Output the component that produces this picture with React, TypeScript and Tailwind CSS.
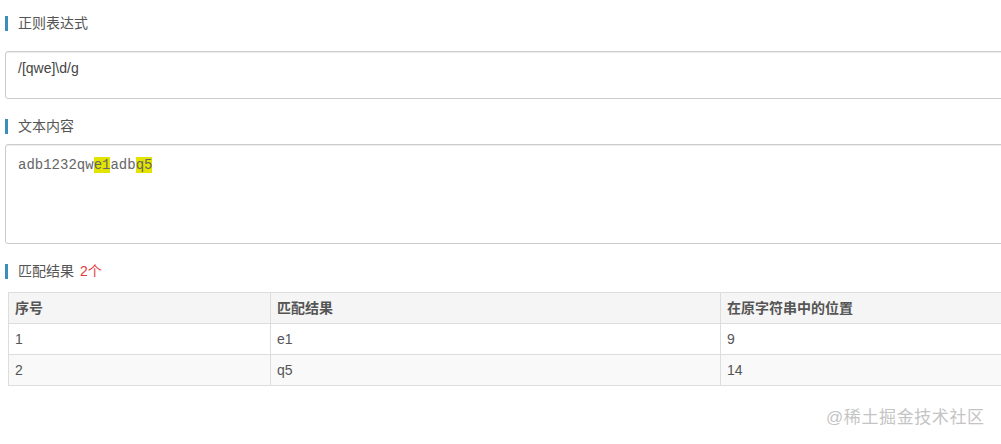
const cjk = { fontFamily: '"Liberation Sans", "Noto Sans CJK SC", sans-serif' }

function Title({ children }: { children: React.ReactNode }) {
  return (
    <div className="flex items-center h-5 pl-[5px]">
      <span className="w-[3px] h-[15px] bg-[#3c8dbc]" />
      <span className="ml-[10px] text-[14px] text-[#555]">{children}</span>
    </div>
  )
}

const rows = [
  { no: '1', match: 'e1', pos: '9' },
  { no: '2', match: 'q5', pos: '14' },
]

export default function App() {
  return (
    <div className="relative w-screen h-[444px] overflow-hidden bg-white" style={cjk}>
      <div className="pt-[13px]">
        <Title>正则表达式</Title>
        <div className="ml-[5px] mt-[18px] w-[1010px] h-[48px] border border-[#ccc] rounded-[3px] shadow-[inset_0_1px_1px_rgba(0,0,0,0.075)] pl-3 pt-[6px] text-[14px] leading-5 text-[#444]">
          /[qwe]\d/g
        </div>

        <div className="mt-[17px]">
          <Title>文本内容</Title>
        </div>
        <div
          className="ml-[5px] mt-2 w-[1010px] h-[100px] border border-[#ccc] rounded-[3px] shadow-[inset_0_1px_1px_rgba(0,0,0,0.075)] pl-3 pt-[10px] text-[14px] leading-5 text-[#666]"
          style={{ fontFamily: '"Liberation Mono", monospace' }}
        >
          adb1232qw<span className="bg-[#e3e300]">e1</span>adb<span className="bg-[#e3e300]">q5</span>
        </div>

        <div className="mt-[17px]">
          <Title>
            匹配结果<span className="ml-[6px] text-[#e4393c]">2个</span>
          </Title>
        </div>

        <table className="ml-2 mt-[11px] w-[1010px] border-collapse text-[14px] text-[#555] table-fixed">
          <colgroup>
            <col className="w-[262px]" />
            <col className="w-[450px]" />
            <col />
          </colgroup>
          <thead>
            <tr className="bg-[#f5f5f5] h-[31px]">
              <th className="border border-[#ddd] px-[6px] text-left font-bold">序号</th>
              <th className="border border-[#ddd] px-[6px] text-left font-bold">匹配结果</th>
              <th className="border border-[#ddd] px-[6px] text-left font-bold">在原字符串中的位置</th>
            </tr>
          </thead>
          <tbody>
            {rows.map((r, i) => (
              <tr key={r.no} className={`h-[31px] ${i % 2 ? 'bg-[#f9f9f9]' : 'bg-white'}`}>
                <td className="border border-[#ddd] px-[6px]">{r.no}</td>
                <td className="border border-[#ddd] px-[6px]">{r.match}</td>
                <td className="border border-[#ddd] px-[6px]">{r.pos}</td>
              </tr>
            ))}
          </tbody>
        </table>
      </div>

      <div className="absolute left-[826px] top-[407px] text-[17px] leading-[22px] text-[#c4c4c4] tracking-[0.6px]">
        @稀土掘金技术社区
      </div>
    </div>
  )
}
